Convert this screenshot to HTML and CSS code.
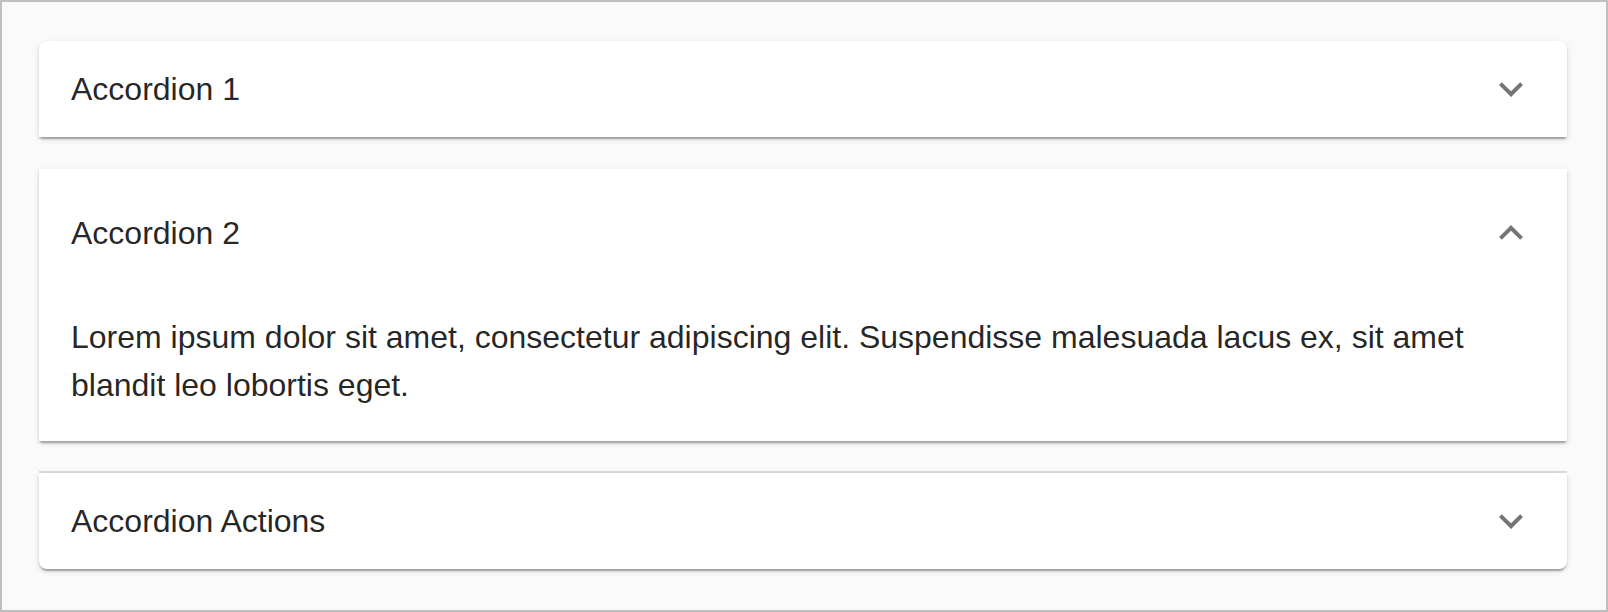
FILE: index.html
```html
<!DOCTYPE html>
<html>
<head>
<meta charset="utf-8">
<link rel="stylesheet" href="styles.css">
</head>
<body>
<div class="frame">
  <div class="accordion first">
    <div class="summary">
      <span class="title">Accordion 1</span>
      <svg class="icon" viewBox="0 0 24 24"><path d="M16.59 8.59 12 13.17 7.41 8.59 6 10l6 6 6-6z"/></svg>
    </div>
  </div>
  <div class="accordion expanded">
    <div class="summary">
      <span class="title">Accordion 2</span>
      <svg class="icon" viewBox="0 0 24 24"><path d="M12 8l-6 6 1.41 1.41L12 10.83l4.59 4.58L18 14z"/></svg>
    </div>
    <div class="details">Lorem ipsum dolor sit amet, consectetur adipiscing elit. Suspendisse malesuada lacus ex, sit amet blandit leo lobortis eget.</div>
  </div>
  <div class="accordion last divided">
    <div class="summary">
      <span class="title">Accordion Actions</span>
      <svg class="icon" viewBox="0 0 24 24"><path d="M16.59 8.59 12 13.17 7.41 8.59 6 10l6 6 6-6z"/></svg>
    </div>
  </div>
</div>
</body>
</html>
```

FILE: styles.css
```css
html, body {
  margin: 0;
  padding: 0;
}
body {
  font-family: "Liberation Sans", Arial, Helvetica, sans-serif;
  color: rgba(0, 0, 0, 0.87);
}
.frame {
  box-sizing: border-box;
  width: 1608px;
  height: 612px;
  border: 2px solid #bfbfbf;
  background: #fafafa;
  padding: 39px 39px 41px 37px;
  display: flex;
  flex-direction: column;
}
.accordion {
  position: relative;
  background: #fff;
  box-shadow: 0 4px 2px -2px rgba(0, 0, 0, 0.2), 0 2px 2px 0 rgba(0, 0, 0, 0.14), 0 2px 6px 0 rgba(0, 0, 0, 0.12);
}
.accordion.first {
  border-top-left-radius: 8px;
  border-top-right-radius: 8px;
}
.accordion.last {
  border-bottom-left-radius: 8px;
  border-bottom-right-radius: 8px;
}
.accordion.expanded {
  margin: 32px 0;
}
.accordion.divided::before {
  content: "";
  position: absolute;
  left: 0;
  right: 0;
  top: -2px;
  height: 2px;
  background: rgba(0, 0, 0, 0.12);
}
.summary {
  display: flex;
  align-items: center;
  justify-content: space-between;
  padding: 0 32px;
  height: 96px;
}
.expanded .summary {
  height: 128px;
}
.title {
  font-size: 32px;
  line-height: 48px;
}
.icon {
  width: 48px;
  height: 48px;
  fill: rgba(0, 0, 0, 0.54);
  flex: none;
}
.details {
  padding: 16px 32px 32px;
  font-size: 32px;
  line-height: 48px;
}
```
